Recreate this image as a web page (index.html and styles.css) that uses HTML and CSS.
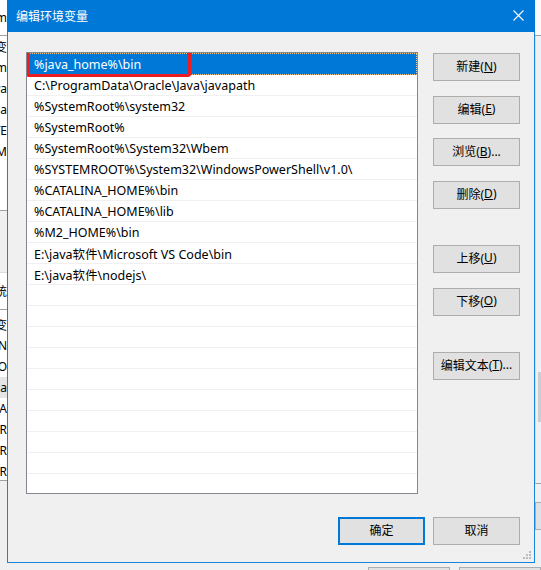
FILE: index.html
```html
<!DOCTYPE html>
<html lang="zh-CN">
<head>
<meta charset="utf-8">
<title>编辑环境变量</title>
<link rel="stylesheet" href="styles.css">
</head>
<body>
<div class="desk">
  <div class="under">
    <div class="under-main">
      <div class="ucol-left">
        <div class="u-top"><span class="clip">Program</span></div>
        <div class="u-rows">
          <div class="u-row"><span class="clip">变</span></div>
          <div class="u-row"><span class="clip">Java_Hom</span></div>
          <div class="u-row"><span class="clip">Java</span></div>
          <div class="u-row"><span class="clip">Pa</span></div>
          <div class="u-row"><span class="clip">TE</span></div>
          <div class="u-row"><span class="clip">TM</span></div>
        </div>
        <div class="u-gap"></div>
        <div class="u-head"><span class="clip">系统</span></div>
        <div class="u-rows2">
          <div class="u-row"><span class="clip">变</span></div>
          <div class="u-row"><span class="clip">N</span></div>
          <div class="u-row"><span class="clip">O</span></div>
          <div class="u-row hl"><span class="clip">Pa</span></div>
          <div class="u-row"><span class="clip">PA</span></div>
          <div class="u-row"><span class="clip">PR</span></div>
          <div class="u-row"><span class="clip">PR</span></div>
          <div class="u-row"><span class="clip">PR</span></div>
        </div>
        <div class="u-fill"></div>
      </div>
      <div class="ucol-mid"></div>
      <div class="ucol-right">
        <div class="ur-top"></div>
        <div class="ur-list">
          <div class="ur-thumb"></div>
        </div>
        <div class="ur-btnarea"><div class="ur-btn"></div></div>
      </div>
    </div>
    <div class="under-bottom">
      <div class="ub-btn ub-a"></div>
      <div class="ub-btn ub-b"></div>
    </div>
  </div>

  <div class="dialog">
    <div class="titlebar">
      <span class="title">编辑环境变量</span>
      <svg class="close" width="11" height="11" viewBox="0 0 11 11"><path d="M0.5 0.5 L10.5 10.5 M10.5 0.5 L0.5 10.5" stroke="#fff" stroke-width="1.1" fill="none"/></svg>
    </div>
    <div class="body">
      <div class="main">
        <div class="list">
          <div class="row first sel"><span>%java_home%\bin</span></div>
          <div class="row"><span>C:\ProgramData\Oracle\Java\javapath</span></div>
          <div class="row"><span>%SystemRoot%\system32</span></div>
          <div class="row"><span>%SystemRoot%</span></div>
          <div class="row"><span>%SystemRoot%\System32\Wbem</span></div>
          <div class="row"><span>%SYSTEMROOT%\System32\WindowsPowerShell\v1.0\</span></div>
          <div class="row"><span>%CATALINA_HOME%\bin</span></div>
          <div class="row"><span>%CATALINA_HOME%\lib</span></div>
          <div class="row"><span>%M2_HOME%\bin</span></div>
          <div class="row"><span>E:\java软件\Microsoft VS Code\bin</span></div>
          <div class="row"><span>E:\java软件\nodejs\</span></div>
          <div class="row"></div>
          <div class="row"></div>
          <div class="row"></div>
          <div class="row"></div>
          <div class="row"></div>
          <div class="row"></div>
          <div class="row"></div>
          <div class="row"></div>
          <div class="row"></div>
          <div class="row"></div>
          <div class="mark"></div>
        </div>
        <div class="side">
          <button class="btn">新建(<u>N</u>)</button>
          <button class="btn">编辑(<u>E</u>)</button>
          <button class="btn">浏览(<u>B</u>)...</button>
          <button class="btn">删除(<u>D</u>)</button>
          <button class="btn group">上移(<u>U</u>)</button>
          <button class="btn">下移(<u>O</u>)</button>
          <button class="btn group">编辑文本(<u>T</u>)...</button>
        </div>
      </div>
      <div class="footer">
        <button class="btn default">确定</button>
        <button class="btn">取消</button>
      </div>
      <svg class="grip" width="9" height="9" viewBox="0 0 9 9">
        <rect x="6" y="0" width="2" height="2" fill="#bcbcbc"/>
        <rect x="3" y="3" width="2" height="2" fill="#bcbcbc"/>
        <rect x="6" y="3" width="2" height="2" fill="#bcbcbc"/>
        <rect x="0" y="6" width="2" height="2" fill="#bcbcbc"/>
        <rect x="3" y="6" width="2" height="2" fill="#bcbcbc"/>
        <rect x="6" y="6" width="2" height="2" fill="#bcbcbc"/>
      </svg>
    </div>
  </div>
</div>
</body>
</html>
```

FILE: styles.css
```css
html, body {
  margin: 0;
  padding: 0;
}
body {
  width: 541px;
  height: 570px;
  overflow: hidden;
  background: #f0f0f0;
  font-family: "Noto Sans", "Noto Sans CJK SC", sans-serif;
  font-size: 12px;
  color: #000;
}
.desk {
  position: relative;
  width: 541px;
  height: 570px;
  overflow: hidden;
}

/* underlying window */
.under {
  display: flex;
  flex-direction: column;
  width: 541px;
  height: 570px;
}
.under-main {
  display: flex;
  height: 563px;
}
.ucol-left {
  width: 7px;
  display: flex;
  flex-direction: column;
  background: #fff;
}
.clip {
  white-space: nowrap;
}
.u-top, .u-row, .u-head {
  display: flex;
  justify-content: flex-end;
  overflow: hidden;
  align-items: center;
}
.u-top {
  height: 35px;
  border-bottom: 1px solid #a0a0a0;
}
.u-rows {
  height: 174px;
  border-bottom: 1px solid #a0a0a0;
}
.u-row {
  height: 21px;
}
.u-row.hl {
  background: #e5e5e5;
}
.u-gap {
  height: 61px;
  background: #f0f0f0;
  border-bottom: 1px solid #dcdcdc;
}
.u-head {
  height: 36px;
  background: #fff;
  border-bottom: 1px solid #a0a0a0;
}
.u-rows2 {
  height: 166px;
  background: #fff;
  padding-top: 4px;
  border-bottom: 1px solid #a0a0a0;
}
.u-fill {
  flex: 1;
  background: #f0f0f0;
}
.ucol-mid {
  flex: 1;
}
.ucol-right {
  width: 6px;
  display: flex;
  flex-direction: column;
}
.ur-top {
  height: 35px;
  background: #fafafa;
  border-bottom: 1px solid #a0a0a0;
}
.ur-list {
  height: 448px;
  border-left: 1px solid #dcdcdc;
  background: #f0f0f0;
  padding-top: 336px;
  box-sizing: border-box;
  border-bottom: 1px solid #a0a0a0;
}
.ur-thumb {
  margin-left: 2px;
  height: 50px;
  background: #cdcdcd;
}
.ur-btnarea {
  flex: 1;
  padding-top: 18px;
}
.ur-btn {
  height: 26px;
  background: #e1e1e1;
  border: 1px solid #adadad;
  border-right: none;
}
.under-bottom {
  height: 7px;
  display: flex;
  padding-top: 4px;
  box-sizing: border-box;
}
.ub-btn {
  height: 10px;
  background: #e1e1e1;
  border: 1px solid #adadad;
}
.ub-a {
  margin-left: 368px;
  width: 84px;
}
.ub-b {
  margin-left: 9px;
  width: 84px;
}

/* dialog */
.dialog {
  position: absolute;
  left: 7px;
  top: 0;
  width: 528px;
  height: 563px;
  box-sizing: border-box;
  border: 1px solid #1883d7;
  border-top: none;
  background: #f0f0f0;
  display: flex;
  flex-direction: column;
}
.titlebar {
  height: 32px;
  margin: 0 -1px;
  background: #0078d7;
  display: flex;
  align-items: center;
  padding: 0 11px 1px 9px;
  box-sizing: border-box;
}
.title {
  color: #fff;
  font-size: 12px;
  flex: 1;
}
.close {
  display: block;
}
.body {
  position: relative;
  flex: 1;
  padding: 20px 14px 0 18px;
}
.main {
  display: flex;
  align-items: flex-start;
}
.list {
  position: relative;
  width: 392px;
  height: 442px;
  box-sizing: border-box;
  border: 1px solid #828790;
  background: #fff;
  overflow: hidden;
  font-size: 12.5px;
}
.row {
  height: 21px;
  box-sizing: border-box;
  border-bottom: 1px solid #f0f0f0;
  padding-left: 7px;
  display: flex;
  align-items: center;
  white-space: nowrap;
}
.row.first {
  height: 22px;
}
.row.sel {
  background: #0078d7;
  color: #fff;
  border: 1px dotted #f5c98a;
  border-left: none;
  padding-left: 7px;
}
.mark {
  position: absolute;
  left: -1px;
  top: -3px;
  width: 165px;
  height: 27px;
  box-sizing: border-box;
  border: 3px solid #ec1c24;
  border-radius: 3px;
}
.side {
  margin-left: 15px;
  padding-top: 1px;
  display: flex;
  flex-direction: column;
  gap: 14.67px;
}
.btn {
  width: 87px;
  height: 28px;
  box-sizing: border-box;
  background: #e1e1e1;
  border: 1px solid #adadad;
  border-radius: 0;
  font-family: "Noto Sans", "Noto Sans CJK SC", sans-serif;
  font-size: 12px;
  color: #000;
  padding: 0 0 2px 0;
  display: flex;
  align-items: center;
  justify-content: center;
}
.btn u {
  text-decoration: underline;
}
.btn.group {
  margin-top: 21.3px;
}
.btn.default {
  border: 2px solid #0078d7;
}
.footer {
  display: flex;
  justify-content: flex-end;
  gap: 8px;
  margin-top: 23px;
}
.grip {
  position: absolute;
  right: 2px;
  bottom: 2px;
}
```
